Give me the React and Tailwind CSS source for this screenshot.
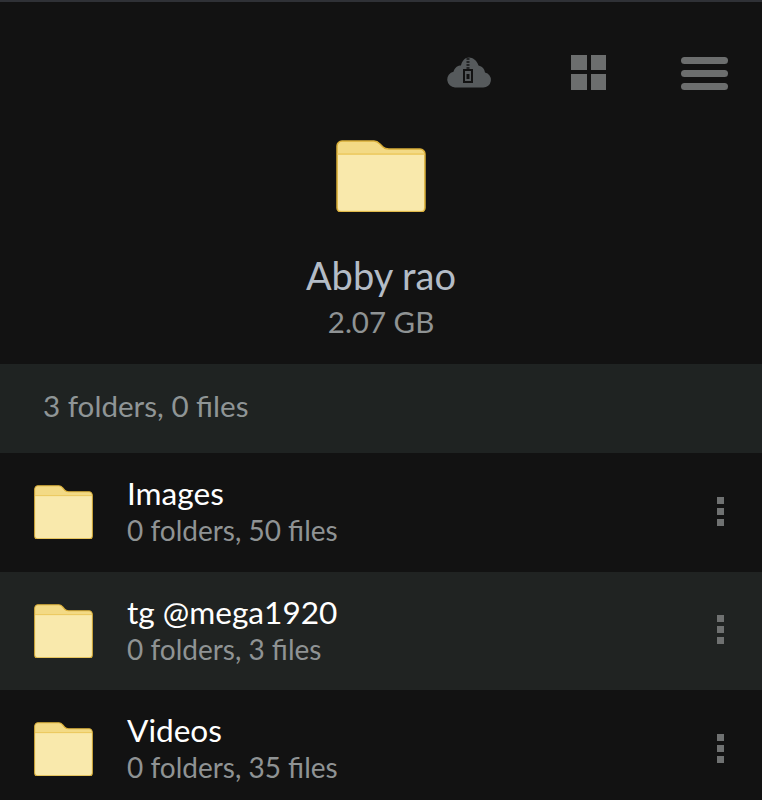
const rows = [
  { name: 'Images', info: '0 folders, 50 files' },
  { name: 'tg @mega1920', info: '0 folders, 3 files', alt: true },
  { name: 'Videos', info: '0 folders, 35 files' },
]

function Folder({ className }) {
  return (
    <svg viewBox="0 0 90 72" preserveAspectRatio="none" className={className}>
      <path
        d="M1 6a5 5 0 0 1 5-5h32c3 0 4 1 6 3l3 3c2 2 3 2 6 2h31a5 5 0 0 1 5 5v54a4 4 0 0 1-4 4H5a4 4 0 0 1-4-4z"
        fill="#f3da85"
        stroke="#d9ae38"
        strokeWidth="1.500"
      />
      <path d="M2 15h86v52a3.500 3.500 0 0 1-3.500 3.500h-79A3.500 3.500 0 0 1 2 67z" fill="#f9e9ac" />
      <path d="M1.500 14h87" stroke="#ecca62" strokeWidth="1.500" />
    </svg>
  )
}

function CloudZip() {
  return (
    <svg viewBox="0 0 44 31" className="h-[31px] w-[44px]">
      <path
        d="M8 30.500a8 8 0 0 1-1.500-15.800C8 10 11 8.500 14 8.500 15 4 18 .5 22 .5s8 3 9.500 8c4 1 6 3.500 6.500 7a7.600 7.600 0 0 1-2 15z"
        fill="#565a5c"
      />
      <path d="M17 13h8v12h-8z" fill="none" stroke="#121212" strokeWidth="2" />
      <path d="M19.500 2h3m-3 3h3m-3 3h3m-3 3h3" stroke="#121212" strokeWidth="1.500" fill="none" />
      <path d="M19.500 17h3v5h-3z" fill="#121212" />
    </svg>
  )
}

function Row({ name, info, alt }) {
  return (
    <div className={`flex h-[118.500px] items-center pl-[34px] pr-[38px] ${alt ? 'bg-[#202322]' : 'bg-[#121212]'}`}>
      <Folder className="h-[54px] w-[59px] shrink-0" />
      <div className="ml-[34px] flex-1">
        <div className="text-[31.600px] leading-[36px] text-white">{name}</div>
        <div className="text-[28px] leading-[38px] text-[#8f9394]">{info}</div>
      </div>
      <div className="mb-[2px] flex flex-col gap-[4px]">
        <span className="h-[7px] w-[7px] bg-[#6f7171]" />
        <span className="h-[7px] w-[7px] bg-[#6f7171]" />
        <span className="h-[7px] w-[7px] bg-[#6f7171]" />
      </div>
    </div>
  )
}

export default function App() {
  return (
    <div className="h-[800px] overflow-hidden bg-[#121212] font-['Lato',sans-serif]">
      <div className="h-[2px] bg-[#2f3136]" />
      <div className="flex h-[136px] items-start justify-end pr-[34px] pt-[53px]">
        <div className="pt-[2px]">
          <CloudZip />
        </div>
        <div className="ml-[80px] grid h-[34.500px] w-[35px] grid-cols-2 gap-[4px]">
          <span className="bg-[#6c6e6e]" />
          <span className="bg-[#6c6e6e]" />
          <span className="bg-[#6c6e6e]" />
          <span className="bg-[#6c6e6e]" />
        </div>
        <div className="ml-[75px] flex w-[47px] flex-col gap-[6.500px] pt-[2px]">
          <span className="h-[6.500px] rounded-full bg-[#6c6e6e]" />
          <span className="h-[6.500px] rounded-full bg-[#6c6e6e]" />
          <span className="h-[6.500px] rounded-full bg-[#6c6e6e]" />
        </div>
      </div>
      <div className="flex h-[226px] flex-col items-center pt-[2px]">
        <Folder className="h-[72px] w-[90px]" />
        <div className="mt-[40px] text-[38px] leading-[46px] text-[#b4bcc6]">Abby rao</div>
        <div className="mt-[5px] text-[29.500px] leading-[38px] text-[#8f9394]">2.07 GB</div>
      </div>
      <div className="flex h-[89px] items-center bg-[#1f2322] pb-[4px] pl-[43px] text-[29.600px] text-[#8f9596]">
        3 folders, 0 files
      </div>
      {rows.map((r) => (
        <Row key={r.name} {...r} />
      ))}
    </div>
  )
}
